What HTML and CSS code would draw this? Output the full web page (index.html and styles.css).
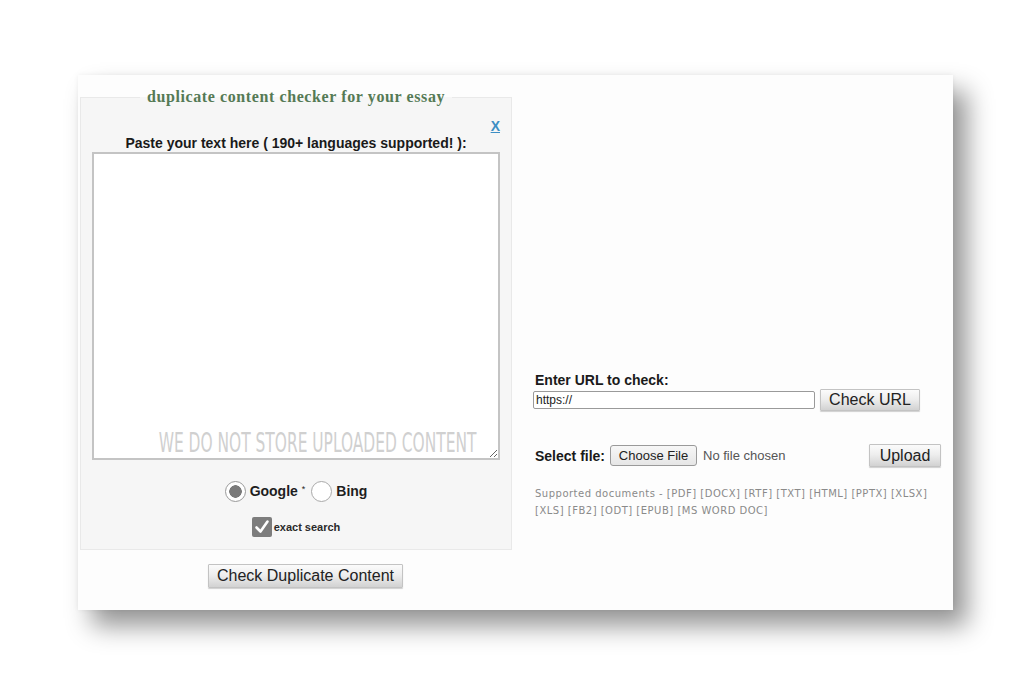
FILE: index.html
```html
<!DOCTYPE html>
<html>
<head>
<meta charset="utf-8">
<title>Duplicate content checker</title>
<link rel="stylesheet" href="styles.css">
</head>
<body>
<div class="card">
  <div class="left">
    <fieldset class="box">
      <legend class="box-title">duplicate content checker for your essay</legend>
      <div class="close-row"><a class="close" href="#">X</a></div>
      <div class="paste-label">Paste your text here ( 190+ languages supported! ):</div>
      <div class="ta-wrap">
        <textarea class="ta"></textarea>
        <span class="watermark">WE DO NOT STORE UPLOADED CONTENT</span>
      </div>
      <div class="engines">
        <label class="engine"><input class="radio" type="radio" name="eng" checked><span>Google <sup class="star">*</sup></span></label>
        <label class="engine"><input class="radio" type="radio" name="eng"><span>Bing</span></label>
      </div>
      <div class="exact">
        <span class="check"><svg viewBox="0 0 20 20" width="20" height="20"><path d="M4.5 10.5 L8.5 14.5 L15.5 4.5" fill="none" stroke="#fff" stroke-width="2.6" stroke-linecap="round" stroke-linejoin="round"/></svg></span>
        <span class="exact-text">exact search</span>
      </div>
    </fieldset>
    <div class="submit-row"><button class="btn btn-main">Check Duplicate Content</button></div>
  </div>
  <div class="right">
    <div class="url-label">Enter URL to check:</div>
    <div class="url-row">
      <input class="url-input" type="text" value="https://">
      <button class="btn btn-url">Check URL</button>
    </div>
    <div class="file-row">
      <span class="file-label">Select file:</span>
      <span class="choose">Choose File</span>
      <span class="nofile">No file chosen</span>
      <button class="btn btn-upload">Upload</button>
    </div>
    <div class="supported">Supported documents - [PDF] [DOCX] [RTF] [TXT] [HTML] [PPTX] [XLSX] [XLS] [FB2] [ODT] [EPUB] [MS WORD DOC]</div>
  </div>
</div>
</body>
</html>
```
FILE: styles.css
```css
html, body {
  margin: 0;
  padding: 0;
  background: #ffffff;
  overflow: hidden;
}
body {
  width: 1024px;
  height: 683px;
  font-family: "Liberation Sans", Arial, sans-serif;
  color: #1e1e1e;
}
.card {
  margin: 75px 0 0 78px;
  width: 875px;
  height: 535px;
  background: #fdfdfd;
  display: flex;
  box-shadow: 14px 16px 24px rgba(0,0,0,0.42), 0 0 5px rgba(0,0,0,0.06);
}
.left {
  width: 435px;
  flex: none;
  display: flex;
  flex-direction: column;
}
.box {
  margin: 12px 0 0 2px;
  width: 431px;
  box-sizing: border-box;
  border: 1px solid #e9e9e9;
  background: #f6f6f6;
  padding: 0 11px 12px;
  display: flex;
  flex-direction: column;
}
.box-title {
  margin: 0 auto;
  padding: 0 7px;
  font-family: "Liberation Serif", "Times New Roman", serif;
  font-weight: bold;
  font-size: 16px;
  letter-spacing: 0.6px;
  line-height: 20px;
  color: #557a55;
}
.close-row {
  margin-top: 11px;
  height: 16px;
  display: flex;
  justify-content: flex-end;
}
.close {
  font-size: 14px;
  font-weight: bold;
  color: #3d8ec4;
  text-decoration: underline;
  line-height: 16px;
}
.paste-label {
  margin-top: 1px;
  text-align: center;
  font-size: 14px;
  font-weight: bold;
  line-height: 16px;
  color: #1a1a1a;
}
.ta-wrap {
  position: relative;
  margin-top: 1px;
  width: 408px;
  height: 308px;
}
.ta {
  display: block;
  width: 408px;
  height: 308px;
  box-sizing: border-box;
  margin: 0;
  border: 2px solid #c4c4c4;
  background: #ffffff;
  resize: both;
}
.watermark {
  position: absolute;
  right: 24px;
  bottom: 3px;
  font-family: "DejaVu Sans Condensed", "DejaVu Sans", sans-serif;
  font-stretch: condensed;
  font-size: 26px;
  line-height: 28px;
  color: #d0d0d0;
  white-space: nowrap;
  transform: scaleX(0.66);
  transform-origin: right bottom;
  pointer-events: none;
}
.engines {
  margin-top: 20px;
  height: 22px;
  display: flex;
  justify-content: center;
  align-items: center;
  gap: 6px;
}
.engine {
  display: flex;
  align-items: center;
  gap: 4px;
  font-size: 14px;
  font-weight: bold;
  color: #1e1e1e;
}
.star {
  font-size: 9px;
  vertical-align: 4px;
  line-height: 0;
  font-weight: normal;
}
.radio {
  appearance: none;
  -webkit-appearance: none;
  margin: 0;
  width: 21px;
  height: 21px;
  border-radius: 50%;
  border: 1.5px solid #a9a9a9;
  background: #ffffff;
  box-sizing: border-box;
}
.radio:checked {
  background: radial-gradient(circle, #7a7a7a 0 6px, #ffffff 6.5px);
  border-color: #9a9a9a;
}
.exact {
  margin-top: 15px;
  height: 20px;
  display: flex;
  justify-content: center;
  align-items: center;
  gap: 2px;
}
.check {
  width: 20px;
  height: 20px;
  background: #7d7d7d;
  border-radius: 2px;
  display: block;
}
.check svg { display: block; }
.exact-text {
  font-size: 11px;
  font-weight: bold;
  color: #2a2a2a;
}
.submit-row {
  margin-top: 14px;
  padding-left: 130px;
}
.btn {
  font-family: "Liberation Sans", Arial, sans-serif;
  font-size: 16px;
  color: #222;
  background: linear-gradient(#fbfbfb 0%, #eeeeee 45%, #d2d2d2 100%);
  border: 1px solid #c3c3c3;
  border-radius: 1px;
  box-shadow: 0 1px 1px rgba(0,0,0,0.18);
  padding: 0;
  margin: 0;
  height: 24px;
  line-height: 22px;
}
.btn-main { width: 195px; }
.right {
  flex: 1;
  padding: 297px 0 0 20px;
  display: flex;
  flex-direction: column;
}
.url-label {
  padding-left: 2px;
  font-size: 14px;
  font-weight: bold;
  line-height: 16px;
  color: #1a1a1a;
}
.url-row {
  margin-top: 1px;
  height: 22px;
  display: flex;
  align-items: center;
  gap: 5px;
}
.url-input {
  width: 282px;
  height: 18px;
  box-sizing: border-box;
  margin: 0;
  border: 1px solid #9a9a9a;
  border-radius: 2px;
  padding: 0 2px;
  font-family: "Liberation Sans", Arial, sans-serif;
  font-size: 12px;
  color: #222;
  background: #fff;
}
.btn-url { width: 100px; height: 22px; line-height: 20px; }
.file-row {
  margin-top: 33px;
  width: 408px;
  height: 23px;
  display: flex;
  align-items: center;
}
.file-label {
  padding-left: 2px;
  font-size: 14px;
  font-weight: bold;
  color: #1a1a1a;
}
.choose {
  margin-left: 5px;
  width: 87px;
  height: 21px;
  box-sizing: border-box;
  border: 1px solid #9a9a9a;
  border-radius: 3px;
  background: linear-gradient(#f7f7f7, #e6e6e6);
  font-size: 13px;
  line-height: 19px;
  text-align: center;
  color: #222;
}
.nofile {
  margin-left: 6px;
  font-size: 13px;
  color: #555;
}
.btn-upload {
  margin-left: auto;
  width: 72px;
  height: 23px;
  line-height: 21px;
}
.supported {
  margin-top: 18px;
  padding-left: 2px;
  width: 400px;
  font-family: "DejaVu Sans", Verdana, sans-serif;
  font-size: 10px;
  letter-spacing: 0.5px;
  line-height: 17px;
  color: #8a8a8a;
}
```
